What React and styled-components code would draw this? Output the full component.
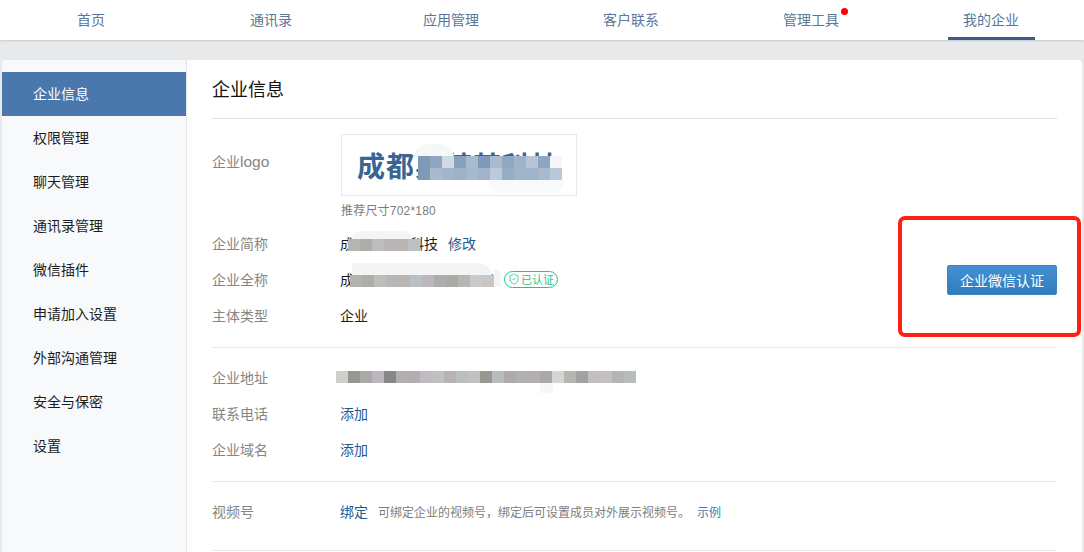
import React from 'react'
import styled, { createGlobalStyle } from 'styled-components'
import { ShieldCheck } from 'lucide-react'

const tabs = ['首页', '通讯录', '应用管理', '客户联系', '管理工具', '我的企业']
const menu = ['企业信息', '权限管理', '聊天管理', '通讯录管理', '微信插件', '申请加入设置', '外部沟通管理', '安全与保密', '设置']

const logoTop = ['#7f9ab8', '#8ea6c0', '#d1d9e4', '#88a2bd', '#a9bacd', '#7c9aba', '#aabbce', '#8fa8c2', '#9fb3c9', '#b6c4d5', '#8ea6c0', '#f4f6f9']
const logoBottom = ['#7f9ab8', '#a9bacd', '#a3b5ca', '#9db1c7', '#a7b8cc', '#a0b3c9', '#bccada', '#98aec5', '#a0b4c9', '#a0b4c9', '#a8bacd', '#bac8d8']
const shortName = ['#b5b5b3', '#adadaa', '#bdbdbc', '#b8b6bb', '#bab5b2', '#bdc0c2']
const fullName = ['#b2b2b0', '#adadaa', '#bdbdbc', '#b8b6bb', '#bab5b2', '#bdc0c2', '#bcb7bd', '#adadab', '#a9aba5', '#b6b6b5', '#cacacd', '#c8c7c3']
const address = ['#cfcfce', '#979792', '#a8a9a9', '#bdb6bc', '#878788', '#b3aeb0', '#b1aeae', '#c0bbc2', '#bfc0bf', '#b8b2b3', '#bcbdbe', '#bfc2c0', '#979892', '#b7bcbf', '#aeaaaa', '#b2b1b0', '#b3afb1', '#a9aaa5', '#d4d6d5', '#b4b6af', '#a2a2a4', '#c4bec0', '#c2c3c1', '#b5b5b4', '#b7bcbc']

export default function App() {
   return (
      <Page>
         <GlobalStyle />
         <TopNav>
            {tabs.map((tab, i) => (
               <Tab key={tab}>
                  <TabLabel $active={i === 5}>
                     {tab}
                     {i === 4 && <RedDot />}
                  </TabLabel>
               </Tab>
            ))}
         </TopNav>
         <Panel>
            <Sidebar>
               {menu.map((item, i) => (
                  <MenuItem key={item} $active={i === 0}>{item}</MenuItem>
               ))}
            </Sidebar>
            <Content>
               <Title>企业信息</Title>
               <Section $top={15} $bottom={14}>
                  <LogoRow>
                     <Label $logo>企业<LogoWord>logo</LogoWord></Label>
                     <div>
                        <LogoBox>
                           <LogoText>成都某某某科技</LogoText>
                           <LogoMosaic>
                              <Mosaic colors={logoTop} />
                              <Mosaic colors={logoBottom} />
                           </LogoMosaic>
                        </LogoBox>
                        <Hint>推荐尺寸702*180</Hint>
                     </div>
                  </LogoRow>
                  <BasicInfo>
                     <div>
                        <Row>
                           <Label>企业简称</Label>
                           <Value>
                              <Masked>
                                 成都某某某科技
                                 <ShortMask><Mosaic colors={shortName} /></ShortMask>
                              </Masked>
                              <EditLink>修改</EditLink>
                           </Value>
                        </Row>
                        <Row>
                           <Label>企业全称</Label>
                           <Value>
                              <Masked>
                                 成都某某某科技有限公司
                                 <FullMask><Mosaic colors={fullName} /></FullMask>
                              </Masked>
                              <Verified>
                                 <ShieldCheck size={12} strokeWidth={1.6} />
                                 已认证
                              </Verified>
                           </Value>
                        </Row>
                        <Row>
                           <Label>主体类型</Label>
                           <Value>企业</Value>
                        </Row>
                     </div>
                     <CertifyButton>企业微信认证</CertifyButton>
                  </BasicInfo>
                  <RedFrame />
               </Section>
               <Section $top={11} $bottom={14}>
                  <Row>
                     <Label>企业地址</Label>
                     <AddressMask><Mosaic colors={address} /></AddressMask>
                  </Row>
                  <Row>
                     <Label>联系电话</Label>
                     <Link>添加</Link>
                  </Row>
                  <Row>
                     <Label>企业域名</Label>
                     <Link>添加</Link>
                  </Row>
               </Section>
               <Section $top={11} $bottom={21}>
                  <Row>
                     <Label>视频号</Label>
                     <Link>绑定</Link>
                     <Tip>可绑定企业的视频号，绑定后可设置成员对外展示视频号。</Tip>
                     <Example>示例</Example>
                  </Row>
               </Section>
            </Content>
         </Panel>
      </Page>
   )
}

const Mosaic = ({ colors }) => (
   <MosaicRow>
      {colors.map((c, i) => <Cell key={i} $c={c} />)}
   </MosaicRow>
)

const GlobalStyle = createGlobalStyle`
   html, body { margin: 0; padding: 0; height: 552px; overflow: hidden; }
   body { font-family: "Liberation Sans", "Noto Sans CJK SC", sans-serif; font-size: 14px; }
`
const Page = styled.div`
   width: 1084px;
   height: 552px;
   overflow: hidden;
   background: #e8e9eb;
`
const TopNav = styled.nav`
   display: grid;
   grid-template-columns: repeat(6, 180px);
   height: 40px;
   padding-left: 1px;
   background: #fff;
   box-shadow: 0 1px 2px rgba(0, 0, 0, 0.14);
`
const Tab = styled.div`
   display: flex;
   justify-content: center;
`
const TabLabel = styled.div`
   position: relative;
   display: flex;
   align-items: center;
   justify-content: center;
   height: 40px;
   box-sizing: border-box;
   padding: 0 15.5px;
   color: #5a7698;
   border-bottom: 3px solid ${p => (p.$active ? '#355f8c' : 'transparent')};
`
const RedDot = styled.span`
   position: absolute;
   top: 8px;
   right: 7px;
   width: 7px;
   height: 7px;
   border-radius: 50%;
   background: #f00;
`
const Panel = styled.main`
   display: flex;
   width: 1080px;
   height: 520px;
   margin: 20px 0 0 2px;
   border-radius: 4px 4px 0 0;
   overflow: hidden;
   background: #fff;
`
const Sidebar = styled.aside`
   width: 185px;
   padding-top: 12px;
   box-sizing: border-box;
   flex-shrink: 0;
   background: #f8f9fb;
   border-right: 1px dotted #d0d5db;
`
const MenuItem = styled.div`
   display: flex;
   align-items: center;
   box-sizing: border-box;
   height: 44px;
   padding: 0 0 2px 31px;
   color: ${p => (p.$active ? '#fff' : '#1c1c1c')};
   background: ${p => (p.$active ? '#4b78ac' : 'transparent')};
`
const Content = styled.div`
   flex: 1;
   padding: 0 25px;
`
const Title = styled.h2`
   display: flex;
   align-items: center;
   box-sizing: border-box;
   height: 59px;
   margin: 0;
   padding-bottom: 3px;
   font-size: 18px;
   font-weight: 400;
   color: #111;
   border-bottom: 1px solid #dde3e8;
`
const Section = styled.section`
   position: relative;
   padding: ${p => p.$top}px 0 ${p => p.$bottom}px;
   border-bottom: 1px solid #e6e7e8;
`
const LogoRow = styled.div`
   display: flex;
`
const Label = styled.div`
   flex-shrink: 0;
   width: ${p => (p.$logo ? '129px' : '128px')};
   padding-top: ${p => (p.$logo ? '17px' : '0')};
   color: #858585;
`
const LogoWord = styled.span`
   font-size: 15.5px;
`
const LogoBox = styled.div`
   position: relative;
   display: flex;
   align-items: center;
   box-sizing: border-box;
   width: 236px;
   height: 62px;
   padding: 6px 0 0 15px;
   overflow: hidden;
   background: #fff;
   border: 1px solid #e6e7e8;
`
const LogoText = styled.div`
   font-size: 28px;
   font-weight: 700;
   line-height: 1;
   letter-spacing: 1px;
   white-space: nowrap;
   color: #3a6491;
`
/* pale smears left by the blur sit above and below the pixelated cells */
const LogoMosaic = styled.div`
   position: absolute;
   top: 21px;
   left: 76px;
   &::before {
      content: '';
      position: absolute;
      top: -12px;
      left: -4px;
      width: 40px;
      height: 14px;
      border-radius: 14px 14px 0 0;
      background: #f5f7f9;
   }
   &::after {
      content: '';
      position: absolute;
      top: 24px;
      left: 70px;
      width: 76px;
      height: 13px;
      border-radius: 0 0 20px 20px;
      background: #f7f9fb;
   }
`
const MosaicRow = styled.div`
   position: relative;
   display: flex;
`
const Cell = styled.i`
   display: block;
   width: 12px;
   height: 12px;
   background: ${p => p.$c};
`
const Hint = styled.div`
   height: 29px;
   padding-top: 5px;
   box-sizing: border-box;
   font-size: 12px;
   letter-spacing: 0.2px;
   color: #7d7d7d;
`
const BasicInfo = styled.div`
   display: flex;
   align-items: center;
   justify-content: space-between;
`
const Row = styled.div`
   display: flex;
   align-items: center;
   height: 36px;
`
const Value = styled.div`
   display: flex;
   align-items: center;
   color: #1c1c1c;
`
const Masked = styled.span`
   position: relative;
   white-space: nowrap;
`
const ShortMask = styled.span`
   position: absolute;
   top: 6px;
   left: 8px;
   &::before {
      content: '';
      position: absolute;
      top: -8px;
      left: 3px;
      width: 62px;
      height: 10px;
      border-radius: 12px 12px 0 0;
      background: #f3f4f4;
   }
`
const FullMask = styled(ShortMask)`
   left: 10px;
   &::before {
      top: -12px;
      left: 2px;
      width: 140px;
      height: 14px;
      border-radius: 14px 60px 0 0;
   }
   &::after {
      content: '';
      position: absolute;
      top: -6px;
      left: 144px;
      width: 7px;
      height: 18px;
      border-radius: 0 10px 0 0;
      background: #f3f4f4;
   }
`
const AddressMask = styled.div`
   position: relative;
   margin-left: -4px;
   &::after {
      content: '';
      position: absolute;
      top: 12px;
      left: 204px;
      width: 13px;
      height: 10px;
      background: #f7f7f7;
   }
`
const Link = styled.span`
   color: #1d5a8f;
`
const EditLink = styled(Link)`
   margin-left: 10px;
`
const Verified = styled.span`
   display: inline-flex;
   align-items: center;
   box-sizing: border-box;
   width: 54px;
   height: 17px;
   margin-left: 10px;
   padding-left: 3px;
   gap: 1px;
   font-size: 11px;
   white-space: nowrap;
   color: #1fc78d;
   border: 1px solid #1fc78d;
   border-radius: 9px;
`
const CertifyButton = styled.button`
   width: 110px;
   height: 30px;
   margin-top: 2px;
   padding: 0;
   font-family: inherit;
   font-size: 14px;
   color: #fff;
   background: linear-gradient(#4490d2, #2f7dbd);
   border: 1px solid #3a85c6;
   border-radius: 2px;
`
const RedFrame = styled.div`
   position: absolute;
   top: 97px;
   left: 686px;
   width: 183px;
   height: 121px;
   box-sizing: border-box;
   border: 4px solid #ff2015;
   border-radius: 7px;
   pointer-events: none;
`
const Tip = styled.span`
   margin-left: 10px;
   font-size: 12px;
   color: #7d7d7d;
`
const Example = styled.span`
   margin-left: 7px;
   font-size: 12px;
   color: #4f79a6;
`
